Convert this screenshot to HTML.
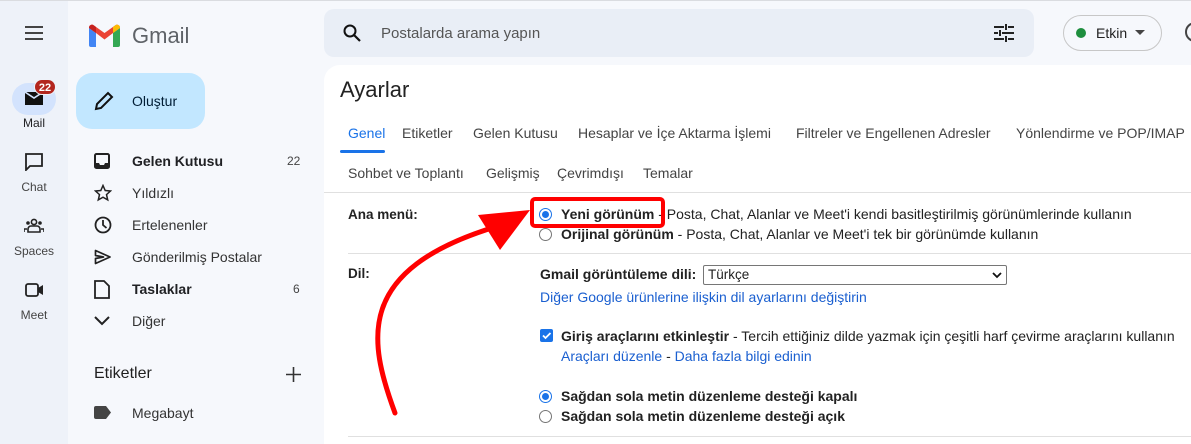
<!DOCTYPE html>
<html><head><meta charset="utf-8"><style>
*{box-sizing:border-box;margin:0;padding:0}
html{width:1191px;height:444px;overflow:hidden}
body{width:1191px;height:444px;overflow:hidden;background:#f6f8fc;font-family:"Liberation Sans",sans-serif;color:#202124;position:relative;font-size:14px}
.abs{position:absolute}
.rail{left:0;top:0;width:68px;height:444px;background:#eef2f9}
.nav{left:68px;top:0;width:256px;height:444px;background:#f6f8fc}
.item{position:absolute;left:132px;font-size:14px;color:#202124}
.ic{position:absolute;left:94px}
.rl{position:absolute;width:68px;text-align:center;font-size:12px;color:#444}
.card{left:324px;top:65px;width:900px;height:379px;background:#fff;border-radius:16px 0 0 0}
.tab{position:absolute;top:125px;font-size:14px;color:#444}
.tab2{position:absolute;top:165px;font-size:14px;color:#444}
.lbl{position:absolute;left:348px;font-weight:bold;font-size:13.5px;color:#222}
.t{position:absolute;font-size:14px;color:#222;white-space:nowrap}
.link{color:#1a5fd0}
.radio{position:absolute;width:13px;height:13px;border-radius:50%;border:1px solid #767676;background:#fff}
.radio.on{border:1px solid #1a73e8}
.radio.on::after{content:"";position:absolute;left:2px;top:2px;width:7px;height:7px;border-radius:50%;background:#1a73e8}
</style></head><body>
<div class="abs rail"></div>
<div class="abs nav"></div>
<div class="abs" style="left:0;top:0;width:1191px;height:1px;background:#dadce0"></div>
<svg class="abs" style="left:24px;top:24px" width="20" height="16"><path d="M1 3h18M1 9h18M1 15h18" stroke="#444" stroke-width="2"/></svg>
<svg class="abs" style="left:89px;top:24px" width="31" height="23" viewBox="0 0 31 23">
<path d="M0 4v17a2 2 0 0 0 2 2h5V9z" fill="#4285f4"/><path d="M24 9v14h5a2 2 0 0 0 2-2V4z" fill="#34a853"/>
<path d="M0 4l7 5 8.5 6.5L24 9l7-5a3 3 0 0 0-5-2.5L15.5 9 5 1.5A3 3 0 0 0 0 4z" fill="#ea4335"/>
<path d="M24 9l7-5a3 3 0 0 0-5-2.5L24 3z" fill="#fbbc04"/><path d="M0 4l7 5V3L5 1.5A3 3 0 0 0 0 4z" fill="#c5221f"/></svg>
<div class="abs" style="left:132px;top:23px;font-size:22px;color:#5f6368">Gmail</div>
<div class="abs" style="left:12px;top:83px;width:44px;height:32px;border-radius:16px;background:#d3e3fd"></div>
<svg class="abs" style="left:25px;top:91px" width="18" height="14"><path d="M0 1h18v13H0z" fill="#111"/><path d="M0 1l9 6 9-6" stroke="#d3e3fd" stroke-width="1.6" fill="none"/></svg>
<div class="abs" style="left:34px;top:79px;width:22px;height:16px;border-radius:8px;background:#b3261e;color:#fff;font-size:11px;font-weight:bold;text-align:center;line-height:16px;border:1px solid #eef2f9">22</div>
<div class="rl" style="top:116px;color:#202124">Mail</div>
<svg class="abs" style="left:25px;top:153px" width="18" height="18"><path d="M1 1h16v12H5l-4 4z" fill="none" stroke="#222" stroke-width="1.8"/></svg>
<div class="rl" style="top:180px">Chat</div>
<svg class="abs" style="left:24px;top:218px" width="20" height="15"><circle cx="10" cy="4" r="2.6" fill="none" stroke="#222" stroke-width="1.6"/><circle cx="4" cy="5" r="1.8" fill="#222"/><circle cx="16" cy="5" r="1.8" fill="#222"/><path d="M4 14v-3a3 3 0 0 1 3-3h6a3 3 0 0 1 3 3v3z" fill="none" stroke="#222" stroke-width="1.6"/><path d="M0 14v-3h3M20 14v-3h-3" stroke="#222" stroke-width="1.6" fill="none"/></svg>
<div class="rl" style="top:244px">Spaces</div>
<svg class="abs" style="left:25px;top:283px" width="19" height="14"><rect x="1" y="1" width="12" height="12" rx="2" fill="none" stroke="#222" stroke-width="1.8"/><path d="M13 5l5-3v10l-5-3z" fill="#222"/></svg>
<div class="rl" style="top:308px">Meet</div>
<div class="abs" style="left:76px;top:73px;width:129px;height:56px;border-radius:16px;background:#c2e7ff"></div>
<svg class="abs" style="left:94px;top:91px" width="20" height="20"><path d="M2 18l1-5L14 2l4 4L7 17z" fill="none" stroke="#111" stroke-width="2"/></svg>
<div class="abs" style="left:132px;top:93px;font-size:14px;color:#001d35">Oluştur</div>
<svg class="ic" style="top:153px" width="16" height="16"><rect x="1" y="1" width="14" height="14" rx="1.5" fill="none" stroke="#222" stroke-width="2"/><path d="M1 10h4l1 2h4l1-2h4v5H1z" fill="#222"/></svg>
<div class="item" style="top:153px;font-weight:bold">Gelen Kutusu</div>
<div class="abs" style="left:287px;top:154px;font-size:12px;color:#444">22</div>
<svg class="ic" style="top:184px" width="18" height="18"><path d="M9 1.5l2.2 5 5.3.5-4 3.6 1.2 5.3L9 13.2 4.3 15.9l1.2-5.3-4-3.6 5.3-.5z" fill="none" stroke="#222" stroke-width="1.5"/></svg>
<div class="item" style="top:185px;color:#333">Yıldızlı</div>
<svg class="ic" style="top:216px" width="18" height="18"><circle cx="9" cy="9" r="7.5" fill="none" stroke="#222" stroke-width="1.8"/><path d="M9 4v5l3.5 3" fill="none" stroke="#222" stroke-width="1.8"/></svg>
<div class="item" style="top:217px;color:#333">Ertelenenler</div>
<svg class="ic" style="top:249px" width="18" height="16"><path d="M1.5 1.5L16 8 1.5 14.5V9.5l8-1.5-8-1.5z" fill="none" stroke="#222" stroke-width="1.7" stroke-linejoin="round"/></svg>
<div class="item" style="top:249px;color:#333">Gönderilmiş Postalar</div>
<svg class="ic" style="top:280px" width="16" height="19"><path d="M1 1h9l5 5v12H1z" fill="none" stroke="#222" stroke-width="1.8"/></svg>
<div class="item" style="top:281px;font-weight:bold">Taslaklar</div>
<div class="abs" style="left:293px;top:282px;font-size:12px;color:#444">6</div>
<svg class="ic" style="top:316px" width="16" height="10"><path d="M1 1l7 7 7-7" fill="none" stroke="#222" stroke-width="2"/></svg>
<div class="item" style="top:313px;color:#333">Diğer</div>
<div class="abs" style="left:94px;top:365px;font-size:16px;color:#1f1f1f">Etiketler</div>
<svg class="abs" style="left:286px;top:367px" width="15" height="15"><path d="M7.5 0v15M0 7.5h15" stroke="#333" stroke-width="1.6"/></svg>
<svg class="ic" style="top:406px" width="17" height="13"><path d="M0 2a2 2 0 0 1 2-2h10l5 6.5-5 6.5H2a2 2 0 0 1-2-2z" fill="#444"/></svg>
<div class="item" style="top:405px;color:#333">Megabayt</div>
<div class="abs" style="left:324px;top:9px;width:710px;height:48px;border-radius:10px;background:#e9eef6"></div>
<svg class="abs" style="left:343px;top:24px" width="18" height="18"><circle cx="7" cy="7" r="5.5" fill="none" stroke="#111" stroke-width="2"/><path d="M11 11l6 6" stroke="#111" stroke-width="2.2"/></svg>
<div class="abs" style="left:381px;top:25px;font-size:15px;color:#555">Postalarda arama yapın</div>
<svg class="abs" style="left:994px;top:24px" width="20" height="18"><path d="M0 3h10M14 3h6M12 0v6M0 9h4M8 9h12M6 6v6M0 15h10M14 15h6M12 12v6" stroke="#222" stroke-width="2"/></svg>
<div class="abs" style="left:1063px;top:15px;width:99px;height:36px;border-radius:18px;border:1px solid #c7c7c7;background:#f6f8fc"></div>
<div class="abs" style="left:1076px;top:28px;width:10px;height:10px;border-radius:50%;background:#1e8e3e"></div>
<div class="abs" style="left:1096px;top:25px;font-size:14px;color:#222">Etkin</div>
<svg class="abs" style="left:1135px;top:30px" width="10" height="6"><path d="M0 0h10L5 5z" fill="#444"/></svg>
<div class="abs" style="left:1185px;top:22px;width:20px;height:20px;border-radius:50%;border:2px solid #444"></div>
<div class="abs card"></div>
<div class="abs" style="left:340px;top:77px;font-size:22px;color:#222">Ayarlar</div>
<div class="tab" style="left:348px;color:#1a73e8">Genel</div>
<div class="abs" style="left:340px;top:150px;width:45px;height:3px;background:#1a73e8;border-radius:2px"></div>
<div class="tab" style="left:402px">Etiketler</div>
<div class="tab" style="left:473px">Gelen Kutusu</div>
<div class="tab" style="left:578px">Hesaplar ve İçe Aktarma İşlemi</div>
<div class="tab" style="left:796px">Filtreler ve Engellenen Adresler</div>
<div class="tab" style="left:1016px">Yönlendirme ve POP/IMAP</div>
<div class="tab2" style="left:348px">Sohbet ve Toplantı</div>
<div class="tab2" style="left:486px">Gelişmiş</div>
<div class="tab2" style="left:557px">Çevrimdışı</div>
<div class="tab2" style="left:643px">Temalar</div>
<div class="abs" style="left:324px;top:192px;width:867px;height:1px;background:#e0e0e0"></div>
<div class="lbl" style="top:207px">Ana menü:</div>
<div class="radio on" style="left:539px;top:208px"></div>
<div class="t" style="left:561px;top:206px"><b>Yeni görünüm</b> - Posta, Chat, Alanlar ve Meet'i kendi basitleştirilmiş görünümlerinde kullanın</div>
<div class="radio" style="left:539px;top:228px"></div>
<div class="t" style="left:561px;top:226px"><b>Orijinal görünüm</b> - Posta, Chat, Alanlar ve Meet'i tek bir görünümde kullanın</div>
<div class="abs" style="left:348px;top:253px;width:843px;height:1px;background:#e0e0e0"></div>
<div class="lbl" style="top:266px">Dil:</div>
<div class="t" style="left:540px;top:266px"><b>Gmail görüntüleme dili:</b></div>
<div class="abs" style="left:703px;top:265px;width:304px;height:20px;border:1px solid #767676;border-radius:2px;font-size:13.5px;padding:1px 4px;color:#222">Türkçe</div>
<svg class="abs" style="left:992px;top:272px" width="10" height="7"><path d="M1 1l4 4 4-4" fill="none" stroke="#111" stroke-width="1.8"/></svg>
<div class="t link" style="left:540px;top:289px">Diğer Google ürünlerine ilişkin dil ayarlarını değiştirin</div>
<div class="abs" style="left:540px;top:329px;width:13px;height:13px;border-radius:2px;background:#1a73e8"></div>
<svg class="abs" style="left:541px;top:330px" width="11" height="11"><path d="M2 5.5l2.5 2.5 5-5" fill="none" stroke="#fff" stroke-width="1.8"/></svg>
<div class="t" style="left:561px;top:328px"><b>Giriş araçlarını etkinleştir</b> - Tercih ettiğiniz dilde yazmak için çeşitli harf çevirme araçlarını kullanın</div>
<div class="t link" style="left:561px;top:348px">Araçları düzenle <span style="color:#222">-</span> Daha fazla bilgi edinin</div>
<div class="radio on" style="left:539px;top:390px"></div>
<div class="t" style="left:561px;top:388px"><b>Sağdan sola metin düzenleme desteği kapalı</b></div>
<div class="radio" style="left:539px;top:410px"></div>
<div class="t" style="left:561px;top:408px"><b>Sağdan sola metin düzenleme desteği açık</b></div>
<div class="abs" style="left:348px;top:436px;width:843px;height:1px;background:#e0e0e0"></div>
<div class="abs" style="left:530px;top:197px;width:135px;height:31px;border:4px solid #f00;border-radius:5px"></div>
<svg class="abs" style="left:360px;top:200px" width="180" height="220"><path d="M35 213C8 140 -5 70 135 27" fill="none" stroke="#f00" stroke-width="5" stroke-linecap="round"/><path d="M118 15L170 10 140 50z" fill="#f00"/></svg>
</body></html>
